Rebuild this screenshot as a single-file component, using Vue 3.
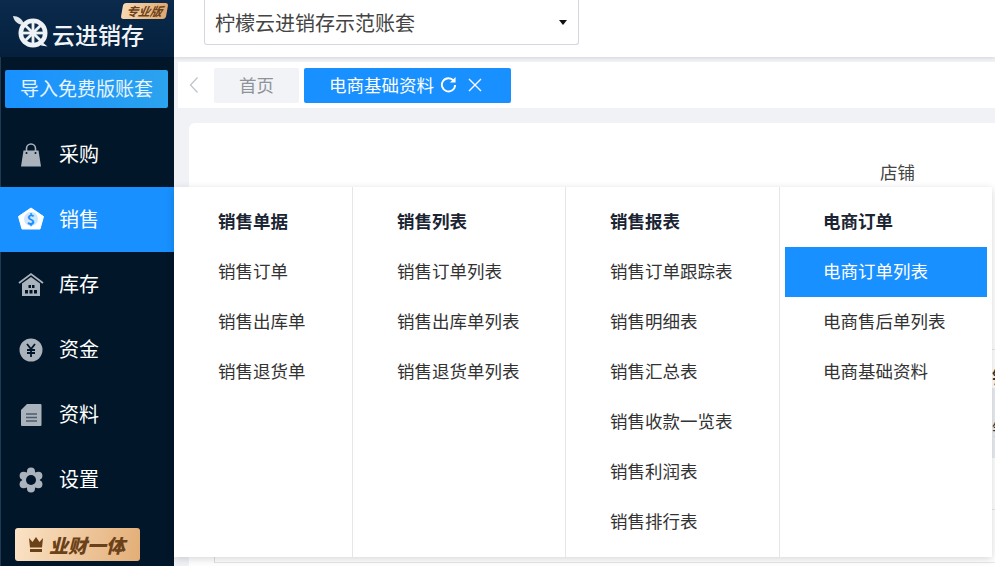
<script setup>
import { ref } from 'vue';

const activeNav = ref('销售');

const navItems = [
    { name: '采购', icon: 'bag' },
    { name: '销售', icon: 'sale' },
    { name: '库存', icon: 'house' },
    { name: '资金', icon: 'coin' },
    { name: '资料', icon: 'doc' },
    { name: '设置', icon: 'gear' },
];

const menuColumns = [
    { title: '销售单据', width: 179, items: ['销售订单', '销售出库单', '销售退货单'] },
    { title: '销售列表', width: 213, items: ['销售订单列表', '销售出库单列表', '销售退货单列表'] },
    { title: '销售报表', width: 214, items: ['销售订单跟踪表', '销售明细表', '销售汇总表', '销售收款一览表', '销售利润表', '销售排行表'] },
    { title: '电商订单', width: 212, items: ['电商订单列表', '电商售后单列表', '电商基础资料'], active: '电商订单列表' },
];
</script>

<template>
    <div class="app">
        <aside class="sidebar">
            <div class="logo">
                <svg class="logo-mark" viewBox="0 0 40 40" width="40" height="40">
                    <path d="M2 7C7 7 12 10 13 16C8 16 3 13 2 7Z" fill="#dfe6ec" />
                    <path d="M31 33L36.500 37.500L30 36.500Z" fill="#eef2f5" />
                    <circle cx="22" cy="24" r="14.500" fill="#eef2f5" />
                    <circle cx="22" cy="24" r="10" fill="#0c2a4a" />
                    <g stroke="#eef2f5" stroke-width="2.800">
                        <path d="M22 13V35" />
                        <path d="M11 24H33" />
                        <path d="M14.200 16.200L29.800 31.800" />
                        <path d="M29.800 16.200L14.200 31.800" />
                    </g>
                    <circle cx="22" cy="24" r="3" fill="#eef2f5" />
                </svg>
                <span class="logo-text">云进销存</span>
                <span class="badge">专业版</span>
            </div>
            <div class="import-wrap">
                <button class="import-btn">导入免费版账套</button>
            </div>
            <nav class="nav">
                <a v-for="item in navItems" :key="item.name" class="nav-item" :class="{ active: item.name === activeNav }">
                    <svg class="nav-icon" viewBox="0 0 26 26" width="26" height="26">
                        <template v-if="item.icon === 'bag'">
                            <path d="M8.500 9V6.500a4.500 4.500 0 0 1 9 0V9" fill="none" stroke="currentColor" stroke-width="1.600" />
                            <path d="M5.500 8.500H20.500L23 24.500H3Z" fill="currentColor" />
                            <circle cx="8.500" cy="11" r="1" fill="#001529" />
                            <circle cx="17.500" cy="11" r="1" fill="#001529" />
                        </template>
                        <template v-else-if="item.icon === 'sale'">
                            <path d="M13 1L25.500 9.500 22 22H4L.5 9.500Z" fill="#fff" stroke="#fff" stroke-linejoin="round" />
                            <circle cx="13" cy="12" r="7" fill="#cfe6ff" />
                            <text x="13" y="17.500" text-anchor="middle" class="sale-glyph">$</text>
                        </template>
                        <template v-else-if="item.icon === 'house'">
                            <path d="M1 11L13 2 25 11" fill="none" stroke="currentColor" stroke-width="1.800" />
                            <path d="M4 11.500L13 5 22 11.500V24H4Z" fill="currentColor" />
                            <path d="M10.500 13h2.500v3h-2.500zM14 13h2.500v3H14zM7 18h3v3.500H7zM11.500 18h3v3.500h-3zM16 18h3v3.500h-3z" fill="#001529" />
                        </template>
                        <template v-else-if="item.icon === 'coin'">
                            <circle cx="13" cy="13" r="11.500" fill="currentColor" />
                            <path d="M9 7l4 5 4-5M13 12v8M9 13h8M9 16h8" fill="none" stroke="#001529" stroke-width="1.800" />
                        </template>
                        <template v-else-if="item.icon === 'doc'">
                            <path d="M9 2H22.500a1 1 0 0 1 1 1V23a1 1 0 0 1-1 1H4a1 1 0 0 1-1-1V8Z" fill="currentColor" />
                            <path d="M8 12H19M8 15.500H19M8 19H19" stroke="#001529" stroke-opacity=".55" stroke-width="1.600" />
                        </template>
                        <template v-else>
                            <circle cx="13" cy="13" r="9" fill="currentColor" />
                            <circle cx="13" cy="4.500" r="4" fill="currentColor" />
                            <circle cx="20.400" cy="8.750" r="4" fill="currentColor" />
                            <circle cx="20.400" cy="17.250" r="4" fill="currentColor" />
                            <circle cx="13" cy="21.500" r="4" fill="currentColor" />
                            <circle cx="5.600" cy="17.250" r="4" fill="currentColor" />
                            <circle cx="5.600" cy="8.750" r="4" fill="currentColor" />
                            <circle cx="13" cy="13" r="5" fill="#001529" />
                        </template>
                    </svg>
                    <span class="nav-label">{{ item.name }}</span>
                </a>
            </nav>
            <div class="promo">
                <svg viewBox="0 0 16 15" width="16" height="15">
                    <path d="M1 1L4.500 5 8 0l3.500 5L15 1l-1 9.500H2Z M2 12H14V15H2Z" fill="#6b4119" />
                </svg>
                <span>业财一体</span>
            </div>
        </aside>

        <main class="main">
            <header class="topbar">
                <div class="account-select">
                    <span>柠檬云进销存示范账套</span>
                    <i class="caret"></i>
                </div>
            </header>
            <div class="tabs">
                <svg class="tabs-back" viewBox="0 0 10 18" width="10" height="18">
                    <path d="M8.500 1.500L1.500 9l7 7.500" fill="none" stroke="#c0c4cc" stroke-width="1.300" />
                </svg>
                <span class="tab">首页</span>
                <span class="tab current">
                    <span class="tab-title">电商基础资料</span>
                    <svg viewBox="0 0 18 18" width="17" height="17">
                        <path d="M14.500 5A7 7 0 1 0 16 9.500" fill="none" stroke="#fff" stroke-width="2" />
                        <path d="M16.500 1V7H10.500Z" fill="#fff" />
                    </svg>
                    <svg viewBox="0 0 14 14" width="14" height="14">
                        <path d="M1 1L13 13M13 1L1 13" stroke="#fff" stroke-width="1.400" />
                    </svg>
                </span>
            </div>
            <div class="content">
                <section class="card">
                    <div class="filter">
                        <label>店铺</label>
                    </div>
                    <div class="table">
                        <div class="table-head">销售</div>
                        <div class="table-row tinted">销售</div>
                        <div class="table-row"></div>
                        <div class="table-row last"></div>
                    </div>
                </section>
            </div>
        </main>

        <div class="mega-menu">
            <div v-for="col in menuColumns" :key="col.title" class="menu-col" :style="{ width: col.width + 'px' }">
                <h4>{{ col.title }}</h4>
                <a v-for="entry in col.items" :key="entry" :class="{ on: entry === col.active }">{{ entry }}</a>
            </div>
        </div>
    </div>
</template>

<style>
html,
body {
    margin: 0;
    overflow: hidden;
}
</style>

<style scoped>
.app {
    position: relative;
    display: flex;
    width: 995px;
    height: 566px;
    overflow: hidden;
    font-family: "Noto Sans CJK SC", "Liberation Sans", sans-serif;
    color: #333;
    background: #f0f2f5;
}

.sidebar {
    display: flex;
    flex-direction: column;
    flex: none;
    width: 174px;
    background: #021629;
    box-shadow: inset 1px 0 #1f3a55;
    color: #fff;
}

.logo {
    position: relative;
    display: flex;
    align-items: center;
    gap: 3px;
    height: 57px;
    padding: 5px 0 0 11px;
    box-sizing: border-box;
    background: linear-gradient(180deg, #0b2a4c, #04203d);
}

.logo-mark {
    flex: none;
    margin-top: -4px;
}

.logo-text {
    font-size: 23px;
    font-weight: 500;
    color: #f1f4f7;
    line-height: 1;
    margin-top: 6px;
    margin-left: -2px;
}

.badge {
    position: absolute;
    top: 3px;
    left: 122px;
    width: 45px;
    height: 16px;
    font-size: 12px;
    font-weight: 700;
    font-style: italic;
    line-height: 16px;
    text-align: center;
    color: #6b4119;
    background: linear-gradient(90deg, #f7d9b4, #e0a86e);
    border-radius: 3px;
    transform: skewX(-10deg);
}

.import-wrap {
    padding: 13px 6px 14px 5px;
}

.import-btn {
    display: block;
    width: 163px;
    height: 38px;
    padding: 0 0 3px;
    border: 0;
    border-radius: 2px;
    font: inherit;
    font-size: 19px;
    color: #e8f4ff;
    background: linear-gradient(90deg, #1890ff, #2ba3ee);
}

.nav-item {
    display: flex;
    align-items: center;
    gap: 15px;
    height: 65px;
    padding-left: 18px;
    font-size: 20px;
    color: #fff;
}

.nav-item .nav-icon {
    flex: none;
    color: #aab2bc;
}

.nav-label {
    margin-bottom: 2px;
}

.nav-item.active {
    background: #1890ff;
}

.sale-glyph {
    font-size: 14px;
    font-weight: 700;
    fill: #1890ff;
}

.promo {
    display: flex;
    align-items: center;
    gap: 5px;
    width: 125px;
    height: 33px;
    margin: 16px 0 0 15px;
    padding-left: 13px;
    box-sizing: border-box;
    border-radius: 3px;
    font-size: 19px;
    font-weight: 900;
    font-style: italic;
    white-space: nowrap;
    color: #6b4119;
    background: linear-gradient(100deg, #fbe3c6, #e3ae77);
}

.main {
    display: flex;
    flex-direction: column;
    flex: 1;
    min-width: 0;
}

.topbar {
    flex: none;
    height: 57px;
    padding-left: 30px;
    background: #fff;
    box-shadow: 0 1px 4px rgba(0, 0, 0, .12);
}

.account-select {
    display: flex;
    align-items: center;
    justify-content: space-between;
    width: 375px;
    height: 45px;
    padding: 0 11px 0 10px;
    box-sizing: border-box;
    border: 1px solid #d4d7de;
    border-top: 0;
    border-radius: 0 0 3px 3px;
    font-size: 20px;
    color: #444;
}

.caret {
    width: 0;
    height: 0;
    border-style: solid;
    border-width: 5px 4.500px 0;
    border-color: #111 transparent transparent;
}

.tabs {
    display: flex;
    align-items: center;
    flex: none;
    gap: 5px;
    height: 46px;
    margin-top: 5px;
    margin-left: 4px;
    padding-left: 11px;
    background: #fff;
}

.tabs-back {
    margin-right: 10px;
}

.tab {
    display: flex;
    align-items: center;
    justify-content: center;
    width: 85px;
    height: 35px;
    margin-top: 1px;
    padding-bottom: 2px;
    box-sizing: border-box;
    border-radius: 2px;
    font-size: 17.500px;
    color: #8f9399;
    background: #f1f3f7;
}

.tab.current {
    justify-content: flex-start;
    gap: 11px;
    width: 207px;
    padding-left: 25px;
    color: #fff;
    background: #1890ff;
}

.tab-title {
    margin-right: -5px;
}

.content {
    flex: 1;
    padding: 15px 0 0 15px;
    min-height: 0;
}

.card {
    height: 100%;
    padding-left: 25px;
    border-radius: 6px 0 0 0;
    background: #fff;
}

.filter {
    height: 62px;
    padding-left: 666px;
    font-size: 17.500px;
    line-height: 98px;
    color: #444;
}

.table {
    margin-top: 164px;
    border-left: 1px solid #dcdfe6;
    border-top: 1px solid #e6e8ec;
    font-size: 17.500px;
    color: #333;
}

.table-head,
.table-row {
    box-sizing: border-box;
    padding-left: 777px;
    white-space: nowrap;
    border-bottom: 1px solid #e6e8ec;
}

.table-head {
    height: 38px;
    line-height: 54px;
    font-weight: 700;
    border-bottom: 0;
}

.table-row {
    height: 52px;
}

.table-row.tinted {
    height: 70px;
    line-height: 82px;
    background: #e9ecf1;
    border-bottom: 0;
}

.table-row.last {
    height: 53px;
}

.mega-menu {
    position: absolute;
    top: 187px;
    left: 174px;
    display: flex;
    width: 818px;
    height: 370px;
    background: #fff;
    box-shadow: 0 2px 8px rgba(0, 0, 0, .16);
}

.menu-col {
    display: flex;
    flex-direction: column;
    flex: none;
    box-sizing: border-box;
    padding-top: 10px;
    border-right: 1px solid #e6e6e6;
}

.menu-col:last-child {
    border-right: 0;
    padding-right: 5px;
}

.menu-col h4,
.menu-col a {
    height: 50px;
    margin: 0;
    padding-left: 44px;
    font-size: 17.500px;
    line-height: 48px;
    white-space: nowrap;
}

.menu-col h4 {
    font-weight: 700;
    color: #1a2433;
}

.menu-col a {
    color: #333;
}

.menu-col:last-child h4,
.menu-col:last-child a {
    margin-left: 5px;
    padding-left: 38px;
}

.menu-col a.on {
    color: #fff;
    background: #1890ff;
}
</style>
